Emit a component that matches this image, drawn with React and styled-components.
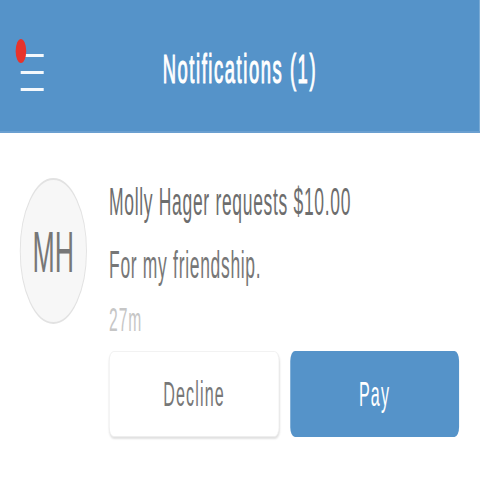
import React from "react";
import styled, { createGlobalStyle } from "styled-components";

// the shot is squeezed horizontally; lay out at full width then squeeze
const SQUEEZE = 0.46;
const DESIGN_WIDTH = Math.round(480 / SQUEEZE);

const GlobalStyle = createGlobalStyle`
  html, body {
    margin: 0;
    padding: 0;
    background: #fff;
    overflow: hidden;
  }
  body {
    font-family: "Liberation Sans", Arial, sans-serif;
  }
`;

const Screen = styled.div`
  width: ${DESIGN_WIDTH}px;
  height: 480px;
  transform: scaleX(${SQUEEZE});
  transform-origin: 0 0;
  background: #fff;
`;

const Header = styled.header`
  height: 133px;
  box-sizing: border-box;
  padding: 6px 45px 0;
  display: grid;
  grid-template-columns: 1fr auto 1fr;
  align-items: center;
  background: #5593c9;
  border-bottom: 2px solid #6a9fd0;
`;

const Menu = styled.div`
  position: relative;
  width: 50px;
  margin-top: 7px;
  display: flex;
  flex-direction: column;
  gap: 14px;
`;

const MenuLine = styled.span`
  display: block;
  height: 3px;
  background: #f4f8fc;
`;

const Badge = styled.span`
  position: absolute;
  left: -11px;
  top: -15px;
  width: 23px;
  height: 24px;
  border-radius: 50%;
  background: #e8332b;
`;

const Title = styled.h1`
  margin: 0;
  font-size: 40px;
  line-height: 40px;
  font-weight: 400;
  letter-spacing: 3.4px;
  color: #fff;
  -webkit-text-stroke: 1.2px #fff;
`;

const Body = styled.main`
  padding: 45px 45px 0 43px;
`;

const Row = styled.div`
  display: flex;
  align-items: flex-start;
  gap: 48px;
`;

const Avatar = styled.div`
  flex: 0 0 auto;
  width: 146px;
  height: 146px;
  box-sizing: border-box;
  border-radius: 50%;
  border: 2px solid #e2e2e2;
  background: #f7f7f7;
  display: flex;
  align-items: center;
  justify-content: center;
  font-size: 58px;
  color: #777;
`;

const Content = styled.div`
  flex: 1;
  padding-top: 5px;
`;

const Line = styled.p`
  margin: ${(p) => p.$gap || 0}px 0 0;
  font-size: ${(p) => p.$size}px;
  line-height: ${(p) => p.$size}px;
  letter-spacing: ${(p) => p.$spacing || 0}px;
  color: ${(p) => p.$color};
`;

const Actions = styled.div`
  margin-top: 15px;
  display: flex;
  gap: 24px;
`;

const Button = styled.button`
  flex: 1;
  height: 86px;
  border-radius: 10px;
  font-family: inherit;
  font-size: 35px;
  letter-spacing: 2.5px;
  cursor: pointer;
  border: ${(p) => (p.$primary ? "none" : "1px solid #ededed")};
  background: ${(p) => (p.$primary ? "#5593c9" : "#fff")};
  color: ${(p) => (p.$primary ? "#fff" : "#777")};
  box-shadow: ${(p) =>
    p.$primary ? "none" : "0 2px 3px rgba(0, 0, 0, 0.12)"};
`;

const App = () => (
  <>
    <GlobalStyle />
    <Screen>
      <Header>
        <Menu>
          <Badge />
          <MenuLine />
          <MenuLine />
          <MenuLine />
        </Menu>
        <Title>Notifications (1)</Title>
        <span />
      </Header>
      <Body>
        <Row>
          <Avatar>MH</Avatar>
          <Content>
            <Line $size={38} $spacing={1.5} $color="#6d6d6d">
              Molly Hager requests $10.00
            </Line>
            <Line $size={38} $spacing={1.5} $color="#777" $gap={25}>
              For my friendship.
            </Line>
            <Line $size={34} $spacing={2} $color="#c6c6c6" $gap={18}>
              27m
            </Line>
            <Actions>
              <Button>Decline</Button>
              <Button $primary>Pay</Button>
            </Actions>
          </Content>
        </Row>
      </Body>
    </Screen>
  </>
);

export default App;
